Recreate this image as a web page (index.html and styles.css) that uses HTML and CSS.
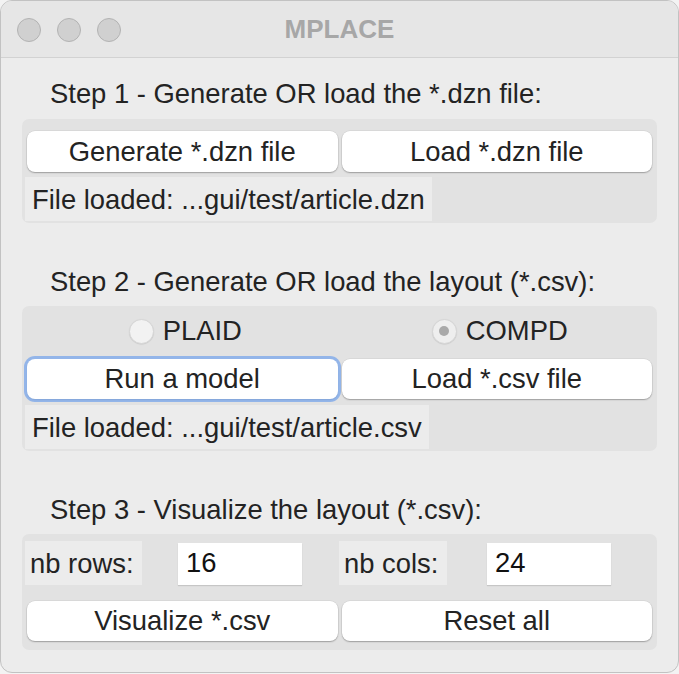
FILE: index.html
```html
<!DOCTYPE html>
<html>
<head>
<meta charset="utf-8">
<link rel="stylesheet" href="styles.css">
</head>
<body>
<div class="window">
  <div class="titlebar">
    <div class="lights"><span class="light"></span><span class="light"></span><span class="light"></span></div>
    <div class="title">MPLACE</div>
    <div></div>
  </div>
  <div class="content">
    <div class="step first">Step 1 - Generate OR load the *.dzn file:</div>
    <div class="group g1">
      <div class="btnrow">
        <div class="btn">Generate *.dzn file</div>
        <div class="btn">Load *.dzn file</div>
      </div>
      <div class="filelabel">File loaded: ...gui/test/article.dzn</div>
    </div>

    <div class="step">Step 2 - Generate OR load the layout (*.csv):</div>
    <div class="group g2">
      <div class="radiorow">
        <div class="radio"><span class="circle"></span><span>PLAID</span></div>
        <div class="radio"><span class="circle checked"></span><span>COMPD</span></div>
      </div>
      <div class="btnrow">
        <div class="btn focused">Run a model</div>
        <div class="btn">Load *.csv file</div>
      </div>
      <div class="filelabel">File loaded: ...gui/test/article.csv</div>
    </div>

    <div class="step">Step 3 - Visualize the layout (*.csv):</div>
    <div class="group g3">
      <div class="entryrow">
        <div class="fieldlabel l1">nb rows:</div>
        <div class="entry e1">16</div>
        <div class="fieldlabel l2">nb cols:</div>
        <div class="entry e2">24</div>
      </div>
      <div class="btnrow">
        <div class="btn">Visualize *.csv</div>
        <div class="btn">Reset all</div>
      </div>
    </div>
  </div>
</div>
</body>
</html>
```
FILE: styles.css
```css
html, body {
  margin: 0;
  padding: 0;
  background: #f3f3f3;
}
body {
  font-family: "Liberation Sans", Arial, sans-serif;
  color: #232323;
}
.window {
  width: 679px;
  height: 673px;
  box-sizing: border-box;
  border: 1px solid #c2c2c2;
  border-radius: 12px;
  overflow: hidden;
  background: #ececec;
}
.titlebar {
  height: 56px;
  border-bottom: 1px solid #d2d2d2;
  background: #e6e6e6;
  display: grid;
  grid-template-columns: 1fr auto 1fr;
  align-items: center;
}
.lights {
  display: flex;
  gap: 16px;
  padding-left: 16px;
  padding-top: 1px;
}
.light {
  width: 22px;
  height: 22px;
  border-radius: 50%;
  background: #d0d0d0;
  border: 1px solid #b3b3b3;
}
.title {
  font-weight: bold;
  font-size: 26px;
  color: #a7a7a7;
}
.content {
  padding: 0 21px 0 21px;
}
.step {
  font-size: 27.4px;
  line-height: 32px;
  height: 32px;
  padding-left: 28px;
  margin-top: 43px;
  margin-bottom: 8px;
}
.step.first {
  margin-top: 20px;
  margin-bottom: 9px;
}
.group {
  background: #e2e2e2;
  border-radius: 7px;
  padding: 0 5px 0 3px;
  display: flex;
  flex-direction: column;
}
.g1 { padding-top: 12px; padding-bottom: 2px; }
.g2 { padding-top: 5px; padding-bottom: 2px; }
.g3 { padding-top: 7px; padding-bottom: 9px; }
.btnrow {
  display: grid;
  grid-template-columns: 1fr 1fr;
  gap: 4px;
  padding-left: 2px;
}
.btn {
  height: 41px;
  background: #fff;
  border-radius: 8px;
  box-shadow: 0 1px 1.5px rgba(0,0,0,0.28), 0 0 0 0.5px rgba(0,0,0,0.08);
  font-size: 27.4px;
  line-height: 41px;
  text-align: center;
}
.g2 .btnrow { margin-top: 8px; }
.g2 .btn { height: 40px; line-height: 40px; }
.g3 .btnrow { margin-top: 16px; }
.g3 .btn { height: 40px; line-height: 40px; }
.btn.focused {
  box-shadow: 0 0 0 3px rgba(120,165,235,0.75), 0 1px 1.5px rgba(0,0,0,0.28);
}
.filelabel {
  align-self: flex-start;
  margin-top: 5px;
  height: 44px;
  line-height: 46px;
  background: #ececec;
  font-size: 27.4px;
  padding: 0 7px 0 7px;
}
.g2 .filelabel { margin-top: 6px; }
.radiorow {
  display: grid;
  grid-template-columns: 1fr 1fr;
  gap: 4px;
  height: 40px;
  padding-left: 2px;
}
.radio {
  display: flex;
  align-items: center;
  justify-content: center;
  gap: 9px;
  font-size: 27.4px;
  padding-left: 6px;
}
.circle {
  width: 25px;
  height: 25px;
  box-sizing: border-box;
  border-radius: 50%;
  background: #f2f2f2;
  border: 1px solid #d6d6d6;
  box-shadow: 0 0.5px 1px rgba(0,0,0,0.12);
  display: flex;
  align-items: center;
  justify-content: center;
}
.circle.checked {
  background: #eeeeee;
}
.circle.checked::after {
  content: "";
  width: 10px;
  height: 10px;
  border-radius: 50%;
  background: #a9a9a9;
}
.entryrow {
  display: flex;
  align-items: flex-end;
  height: 44px;
}
.fieldlabel {
  height: 44px;
  line-height: 46px;
  background: #ececec;
  font-size: 27.4px;
  padding: 0 6px 0 5px;
  box-sizing: border-box;
}
.l1 { width: 117px; }
.l2 { width: 108px; margin-left: 37px; }
.entry {
  width: 124px;
  height: 42px;
  background: #fff;
  font-size: 27.4px;
  line-height: 40px;
  padding-left: 8px;
  box-sizing: border-box;
  color: #111;
  box-shadow: 0 1px 1px rgba(0,0,0,0.12);
}
.e1 { margin-left: 36px; }
.e2 { margin-left: 40px; }
```
